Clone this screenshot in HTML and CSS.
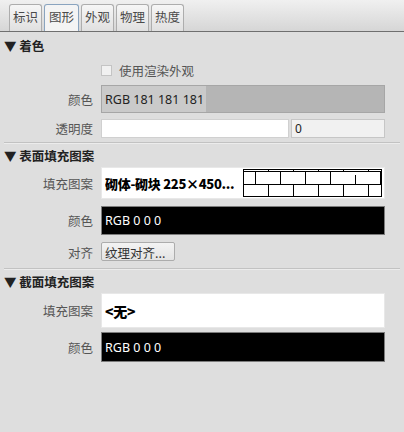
FILE: index.html
```html
<!DOCTYPE html>
<html lang="zh-CN">
  <head>
    <meta charset="UTF-8" />
    <title>图元信息</title>
    <link rel="stylesheet" href="styles.css">
  </head>
  <body>
    <nav class="tabs">
      <span class="tab">标识</span>
      <span class="tab active">图形</span>
      <span class="tab">外观</span>
      <span class="tab">物理</span>
      <span class="tab">热度</span>
    </nav>

    <main class="panel">
      <h3 class="group-title">▼ 着色</h3>
      <div class="row row-check">
        <span></span>
        <label class="check"><i class="box"></i>使用渲染外观</label>
      </div>
      <div class="row row-color">
        <span class="label">颜色</span>
        <div class="field gray"><span class="rgb">RGB 181 181 181</span></div>
      </div>
      <div class="row row-alpha">
        <span class="label">透明度</span>
        <div class="alpha">
          <div class="field white"></div>
          <div class="field num">0</div>
        </div>
      </div>
      <hr class="sep sep-1" />

      <h3 class="group-title gt-2">▼ 表面填充图案</h3>
      <div class="row row-pattern">
        <span class="label">填充图案</span>
        <div class="field white pattern">
          <b>砌体-砌块 225×450...</b>
          <svg width="139" height="28" viewBox="0 0 139 28">
            <g stroke="#000" stroke-width="1" fill="none" shape-rendering="crispEdges">
              <rect x="0.5" y="0.5" width="138" height="27" />
              <line x1="0" y1="2.5" x2="139" y2="2.5" />
              <line x1="0" y1="15.5" x2="139" y2="15.5" />
              <path d="M25.5 0V3 M50.5 0V3 M75.5 0V3 M100.5 0V3 M125.5 0V3" />
              <path d="M12.5 3V15 M37.5 3V15 M62.5 3V15 M87.5 3V15 M112.5 6V15 M137.5 3V15" />
              <path d="M25.5 15V28 M50.5 15V28 M75.5 15V28 M100.5 15V28 M125.5 15V28" />
            </g>
          </svg>
        </div>
      </div>
      <div class="row row-black">
        <span class="label">颜色</span>
        <div class="field black">RGB 0 0 0</div>
      </div>
      <div class="row row-align">
        <span class="label">对齐</span>
        <div><button class="btn">纹理对齐...</button></div>
      </div>
      <hr class="sep sep-2" />

      <h3 class="group-title gt-3">▼ 截面填充图案</h3>
      <div class="row row-none">
        <span class="label">填充图案</span>
        <div class="field white none"><b>&lt;无&gt;</b></div>
      </div>
      <div class="row row-black-2">
        <span class="label">颜色</span>
        <div class="field black">RGB 0 0 0</div>
      </div>
    </main>
  </body>
</html>
```

FILE: styles.css
```css
:root {
  --bg: #dedede;
  --label: #555555;
  --line: #c2c2c2;
}
* {
  margin: 0;
  padding: 0;
  box-sizing: border-box;
}
body {
  width: 404px;
  height: 432px;
  overflow: hidden;
  background-color: var(--bg);
  font-family: "Noto Sans", "Noto Sans CJK SC", sans-serif;
  font-size: 12px;
  color: #333;
  white-space: nowrap;
}

.tabs {
  display: flex;
  align-items: flex-end;
  gap: 2px;
  height: 32px;
  padding-left: 9px;
  background: linear-gradient(#f0f0f0, #d6d6d6);
  border-bottom: 1px solid #6f6f6f;
}
.tab {
  width: 33px;
  height: 27px;
  line-height: 24px;
  text-align: center;
  font-family: "Noto Sans CJK SC", sans-serif;
  font-size: 12.5px;
  color: #4a4a4a;
  border: 1px solid #adadad;
  border-bottom: none;
  border-radius: 3px 3px 0 0;
  background: linear-gradient(#f6f6f6, #e0e0e0);
}
.tab.active {
  width: 35px;
  border-color: #8aa4bf;
  background: #f4f4f4;
}

.panel {
  padding: 0 19px 0 4px;
}
.group-title {
  height: 16px;
  line-height: 16px;
  margin-top: 6px;
  font-family: "Noto Sans CJK SC", sans-serif;
  font-size: 12.5px;
  font-weight: bold;
  color: #222;
}
.gt-2,
.gt-3 {
  margin-top: 4px;
}

.row {
  display: grid;
  grid-template-columns: 89px 284px;
  column-gap: 8px;
  align-items: center;
}
.label {
  text-align: right;
  font-family: "Noto Sans CJK SC", sans-serif;
  font-size: 12.5px;
  color: var(--label);
}

.row-check { margin-top: 7px; height: 15px; }
.row-color { margin-top: 9px; height: 28px; }
.row-alpha { margin-top: 6px; height: 17px; }
.row-pattern { margin-top: 3px; height: 32px; }
.row-black { margin-top: 7px; height: 29px; }
.row-align { margin-top: 7px; height: 19px; }
.row-none { margin-top: 3px; height: 35px; }
.row-black-2 { margin-top: 4px; height: 30px; }

.check {
  display: flex;
  align-items: center;
  gap: 7px;
  font-family: "Noto Sans CJK SC", sans-serif;
  font-size: 12.5px;
  color: var(--label);
}
.box {
  width: 11px;
  height: 11px;
  border: 1px solid #c4c4c4;
  background: #f1f1f1;
}

.field {
  height: 100%;
  display: flex;
  align-items: center;
  padding-left: 3px;
  overflow: hidden;
}
.gray {
  padding-left: 0;
  background: #b5b5b5;
  border: 1px solid #a6a6a6;
}
.rgb {
  height: 100%;
  display: flex;
  align-items: center;
  flex: 0 0 104px;
  padding-left: 3px;
  background: #cacaca;
  color: #222;
  font-size: 12.5px;
}
.alpha {
  display: flex;
  gap: 2px;
  height: 100%;
}
.white {
  background: #fff;
  border: 1px solid #e8e8e8;
}
.alpha .white {
  width: 188px;
  border-color: #d0d0d0;
}
.num {
  flex: 1;
  background: #f1f1f1;
  border: 1px solid #c6c6c6;
  color: #222;
}
.pattern {
  justify-content: space-between;
  padding-right: 2px;
}
.pattern svg {
  flex: none;
}
.pattern b {
  flex: 0 1 auto;
  min-width: 0;
  overflow: hidden;
}
.pattern b,
.none b {
  font-family: "Noto Sans CJK SC", sans-serif;
  font-size: 13px;
  font-weight: 900;
  letter-spacing: -0.3px;
  color: #000;
}
.none b {
  font-size: 14px;
}
.black {
  background: #000;
  color: #fff;
  border: 1px solid #7c7c7c;
  font-size: 12.5px;
}
.btn {
  height: 19px;
  width: 74px;
  border: 1px solid #acacac;
  border-radius: 2px;
  background: linear-gradient(#f3f3f3, #e3e3e3);
  font-family: "Noto Sans CJK SC", sans-serif;
  font-size: 12.5px;
  color: #333;
  text-align: left;
  padding-left: 3px;
}
.sep {
  border: none;
  border-top: 1px solid var(--line);
  border-bottom: 1px solid #ececec;
  margin-right: -15px;
}
.sep-1 { margin-top: 6px; }
.sep-2 { margin-top: 7px; }
```
